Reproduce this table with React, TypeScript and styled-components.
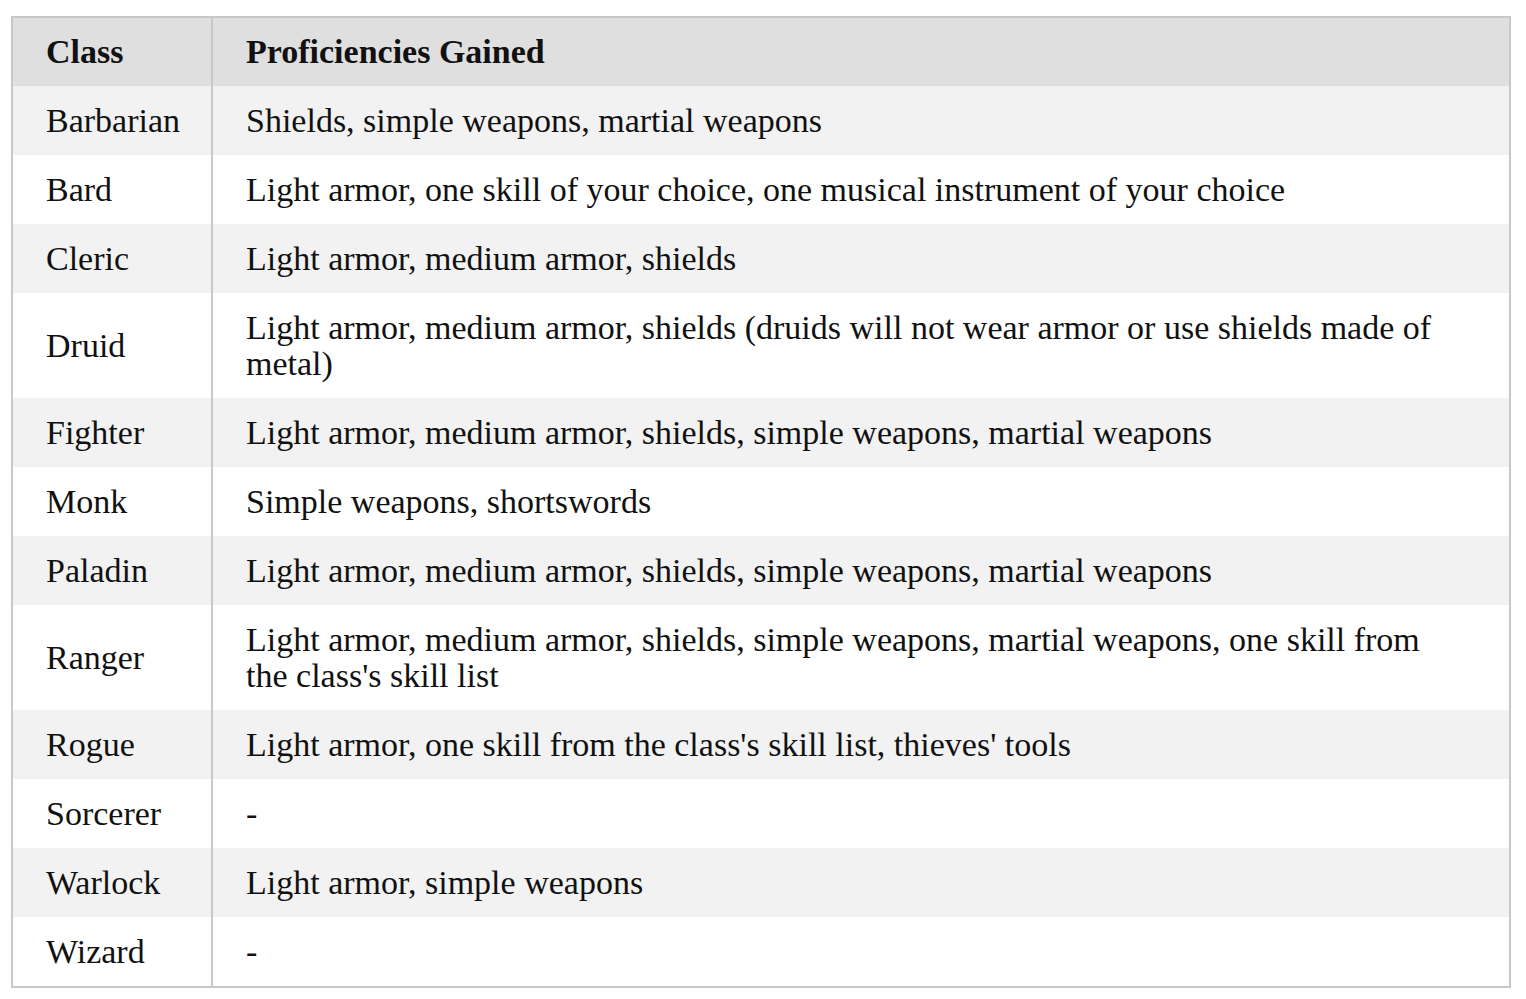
import React from 'react';
import styled, { createGlobalStyle } from 'styled-components';

const GlobalStyle = createGlobalStyle`
  html, body {
    margin: 0;
    padding: 0;
    background: #ffffff;
  }
  body {
    font-family: 'Liberation Serif', 'Times New Roman', serif;
    color: #111111;
  }
`;

const Page = styled.div`
  padding: 16px 15px 0 11px;
`;

const Table = styled.table`
  width: 1500px;
  border-collapse: collapse;
  border: 2px solid #c8c8c8;
  font-size: 34px;
  line-height: 36px;
`;

const HeadRow = styled.tr`
  background: #dfdfdf;
`;

const Row = styled.tr<{ $shaded: boolean }>`
  background: ${(p) => (p.$shaded ? '#f2f2f2' : '#ffffff')};
`;

const HeadCell = styled.th<{ $first?: boolean }>`
  text-align: left;
  font-weight: 700;
  padding: 16px 45px 16px 33px;
  vertical-align: middle;
  ${(p) =>
    p.$first
      ? 'width: 200px; padding-right: 8px; box-sizing: border-box; border-right: 2px solid #c8c8c8;'
      : ''}
`;

const Cell = styled.td<{ $first?: boolean }>`
  padding: 17px 45px 16px 33px;
  vertical-align: middle;
  ${(p) =>
    p.$first
      ? 'width: 200px; padding-right: 8px; box-sizing: border-box; border-right: 2px solid #c8c8c8;'
      : ''}
`;

interface ClassRow {
  name: string;
  gained: string;
}

const rows: ClassRow[] = [
  { name: 'Barbarian', gained: 'Shields, simple weapons, martial weapons' },
  { name: 'Bard', gained: 'Light armor, one skill of your choice, one musical instrument of your choice' },
  { name: 'Cleric', gained: 'Light armor, medium armor, shields' },
  {
    name: 'Druid',
    gained: 'Light armor, medium armor, shields (druids will not wear armor or use shields made of metal)',
  },
  { name: 'Fighter', gained: 'Light armor, medium armor, shields, simple weapons, martial weapons' },
  { name: 'Monk', gained: 'Simple weapons, shortswords' },
  { name: 'Paladin', gained: 'Light armor, medium armor, shields, simple weapons, martial weapons' },
  {
    name: 'Ranger',
    gained:
      "Light armor, medium armor, shields, simple weapons, martial weapons, one skill from the class's skill list",
  },
  { name: 'Rogue', gained: "Light armor, one skill from the class's skill list, thieves' tools" },
  { name: 'Sorcerer', gained: '-' },
  { name: 'Warlock', gained: 'Light armor, simple weapons' },
  { name: 'Wizard', gained: '-' },
];

const App: React.FC = () => {
  return (
    <>
      <GlobalStyle />
      <Page>
        <Table>
          <thead>
            <HeadRow>
              <HeadCell $first>Class</HeadCell>
              <HeadCell>Proficiencies Gained</HeadCell>
            </HeadRow>
          </thead>
          <tbody>
            {rows.map((r, i) => (
              <Row key={r.name} $shaded={i % 2 === 0}>
                <Cell $first>{r.name}</Cell>
                <Cell>{r.gained}</Cell>
              </Row>
            ))}
          </tbody>
        </Table>
      </Page>
    </>
  );
};

export default App;
